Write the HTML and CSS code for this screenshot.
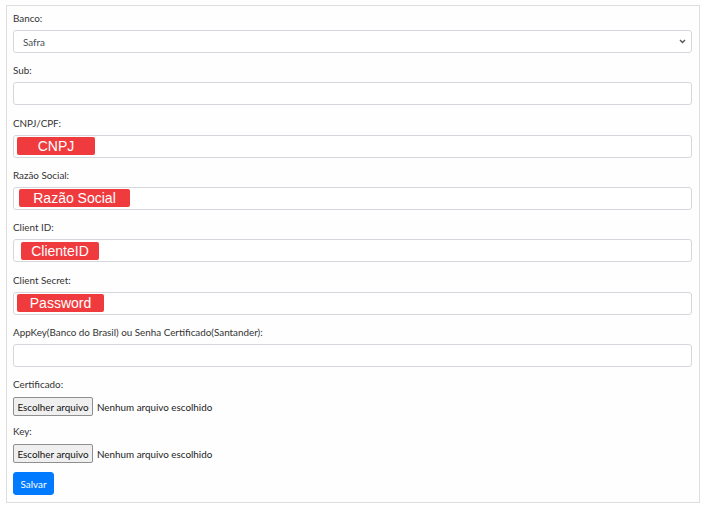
FILE: index.html
```html
<!DOCTYPE html>
<html lang="pt-BR">
<head>
<meta charset="utf-8">
<title>Configuração bancária</title>
<link rel="stylesheet" href="styles.css">
</head>
<body>
<div class="card">
  <div class="group">
    <div class="label">Banco:</div>
    <div class="control select">
      <span>Safra</span>
      <svg class="chev" width="7" height="5" viewBox="0 0 7 5"><path d="M1 1 L3.5 3.5 L6 1" fill="none" stroke="#555" stroke-width="1.4"/></svg>
    </div>
  </div>
  <div class="group">
    <div class="label">Sub:</div>
    <div class="control"></div>
  </div>
  <div class="group">
    <div class="label">CNPJ/CPF:</div>
    <div class="control"><span class="tag tag-cnpj">CNPJ</span></div>
  </div>
  <div class="group">
    <div class="label">Razão Social:</div>
    <div class="control"><span class="tag tag-razao">Razão Social</span></div>
  </div>
  <div class="group">
    <div class="label">Client ID:</div>
    <div class="control"><span class="tag tag-client">ClienteID</span></div>
  </div>
  <div class="group">
    <div class="label">Client Secret:</div>
    <div class="control"><span class="tag tag-pass">Password</span></div>
  </div>
  <div class="group">
    <div class="label">AppKey(Banco do Brasil) ou Senha Certificado(Santander):</div>
    <div class="control"></div>
  </div>
  <div class="group file-group">
    <div class="label">Certificado:</div>
    <div class="file"><span class="file-btn">Escolher arquivo</span><span class="file-name">Nenhum arquivo escolhido</span></div>
  </div>
  <div class="group file-group">
    <div class="label">Key:</div>
    <div class="file"><span class="file-btn">Escolher arquivo</span><span class="file-name">Nenhum arquivo escolhido</span></div>
  </div>
  <button class="btn">Salvar</button>
</div>
</body>
</html>
```
FILE: styles.css
```css
html, body {
  margin: 0;
  padding: 0;
  background: #ffffff;
}
body {
  padding: 5px 10px 0 6px;
  font-family: "Lato", "Open Sans", sans-serif;
  font-size: 9.85px;
  color: #212529;
}
.card {
  border: 1px solid #dedede;
  background: #fefefe;
  padding: 6px 7px 6px 6px;
  height: 498px;
  box-sizing: border-box;
}
.group {
  margin-bottom: 11.33px;
}
.label {
  line-height: 13px;
  height: 13px;
  margin-bottom: 5px;
  color: #333333;
}
.control {
  height: 23px;
  box-sizing: border-box;
  border: 1px solid #d4d8dc;
  border-radius: 3px;
  background: #fff;
  display: flex;
  align-items: center;
}
.select {
  justify-content: space-between;
  padding: 0 5px 0 9px;
  color: #495057;
}
.chev {
  display: block;
}
.tag {
  display: inline-block;
  background: #ef3b3e;
  color: #fff;
  font-family: "Liberation Sans", Arial, sans-serif;
  font-size: 14px;
  line-height: 18px;
  height: 18px;
  border-radius: 2px;
  text-align: center;
  box-sizing: border-box;
}
.tag-cnpj { margin-left: 3px; width: 78px; }
.tag-razao { margin-left: 5px; width: 111px; }
.tag-client { margin-left: 7px; width: 78px; }
.tag-pass { margin-left: 3px; width: 87px; }
.file-group {
  margin-bottom: 9px;
}
.file-group .label {
  margin-bottom: 6px;
}
.file {
  display: flex;
  align-items: center;
  height: 19px;
}
.file-btn {
  display: inline-flex;
  align-items: center;
  justify-content: center;
  width: 80px;
  height: 19px;
  box-sizing: border-box;
  background: #efefef;
  border: 1px solid #8f8f8f;
  border-radius: 2px;
  color: #111;
}
.file-name {
  margin-left: 4px;
  color: #222;
}
.btn {
  display: block;
  width: 41px;
  height: 23px;
  padding: 0;
  border: 1px solid #007bff;
  background: #007bff;
  color: #fff;
  border-radius: 3px;
  font-family: inherit;
  font-size: 9.85px;
}
```
